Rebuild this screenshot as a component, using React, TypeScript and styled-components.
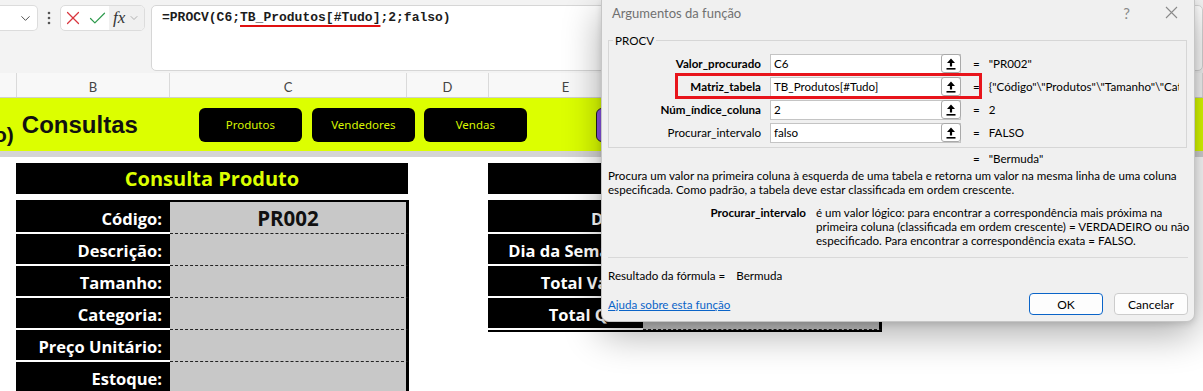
import styled, { createGlobalStyle } from "styled-components";
import { X, Check, ChevronDown } from "lucide-react";

const GlobalStyle = createGlobalStyle`
  html, body { margin: 0; padding: 0; background: #ffffff; }
  body { font-family: "Lato", "Liberation Sans", sans-serif; }
`;

// sheet column widths: A (cut off), B, C, D, E, F, rest
const COLUMNS = "17px 153px 237px 82px 154px 237px 1fr";

const Screen = styled.div`
  position: relative;
  width: 1203px;
  height: 391px;
  overflow: hidden;
  background: #fff;
`;

/* ---------- formula bar ---------- */
const FormulaBar = styled.div`
  display: flex;
  align-items: flex-start;
  height: 73px;
  box-sizing: border-box;
  padding-top: 5px;
  background: #f3f3f3;
`;

const NameBox = styled.div`
  width: 38px;
  height: 26px;
  box-sizing: border-box;
  display: flex;
  align-items: center;
  justify-content: flex-end;
  padding-right: 4px;
  background: #fff;
  border: 1px solid #dcdcdc;
  border-left: none;
  border-radius: 0 5px 5px 0;
  color: #444;
`;

const Grip = styled.div`
  width: 22px;
  height: 26px;
  display: flex;
  align-items: center;
  justify-content: center;
`;

const ActionBox = styled.div`
  width: 85px;
  height: 26px;
  box-sizing: border-box;
  display: flex;
  align-items: stretch;
  background: #fff;
  border: 1px solid #dcdcdc;
  border-radius: 5px;
  overflow: hidden;
`;

const ActionIcon = styled.span<{ $color: string }>`
  width: 24px;
  display: flex;
  align-items: center;
  justify-content: center;
  color: ${(p) => p.$color};
`;

const FxButton = styled.span`
  flex: 1;
  display: flex;
  align-items: center;
  gap: 3px;
  padding-left: 4px;
  background: #f0f0f0;
  color: #999;
`;

const FxText = styled.span`
  font: italic 17px "Liberation Serif", serif;
  color: #333;
`;

const FormulaInput = styled.div`
  flex: 1;
  height: 66px;
  box-sizing: border-box;
  margin-left: 6px;
  padding: 3px 10px;
  background: #fff;
  border: 1px solid #d6d6d6;
  border-radius: 5px;
  font: 700 13px/18px "Liberation Mono", monospace;
  color: #1c1c1c;
  white-space: nowrap;
`;

const RefMark = styled.span`
  text-decoration: underline;
  text-decoration-color: #e01010;
  text-decoration-thickness: 2px;
  text-underline-offset: 4px;
`;

/* ---------- column headers ---------- */
const ColumnHeaders = styled.div`
  display: grid;
  grid-template-columns: ${COLUMNS};
  height: 25px;
  box-sizing: border-box;
  background: #f8f8f8;
  border-bottom: 1px solid #cfcfcf;
`;

const ColumnHeader = styled.div`
  display: flex;
  align-items: center;
  justify-content: center;
  padding-top: 4px;
  border-right: 1px solid #dadada;
  font: 13px "Lato", sans-serif;
  color: #444;
`;

/* ---------- yellow banner ---------- */
const Banner = styled.div`
  display: flex;
  align-items: center;
  height: 53px;
  background: #dcff00;
`;

const CutLabel = styled.span`
  align-self: flex-end;
  margin: 0 0 4px -6px;
  font: 700 21px/24px "Liberation Sans", Arial, sans-serif;
  color: #111;
`;

const BannerTitle = styled.h1`
  margin: 0 0 0 8px;
  font: 700 24px "Liberation Sans", Arial, sans-serif;
  color: #111;
`;

const NavButton = styled.div<{ $offset: number; $purple?: boolean }>`
  width: 103px;
  height: 34px;
  box-sizing: border-box;
  margin-left: ${(p) => p.$offset}px;
  display: flex;
  align-items: center;
  justify-content: center;
  border-radius: 6px;
  background: ${(p) => (p.$purple ? "#8b55e8" : "#000")};
  border: ${(p) => (p.$purple ? "1.5px solid #222" : "none")};
  color: #d9f500;
  font: 11.5px "Noto Sans", sans-serif;
`;

const BannerEdge = styled.div`
  height: 6px;
  background: #d4d4d4;
`;

/* ---------- query panels ---------- */
const Sheet = styled.div`
  display: grid;
  grid-template-columns: ${COLUMNS};
  padding-top: 6px;
`;

const Panel = styled.section<{ $cols: string }>`
  grid-column: ${(p) => p.$cols};
  margin: 0 -2px 0 -1px;
`;

const PanelHeader = styled.div`
  height: 31px;
  margin: 0 1px 6px 0;
  display: flex;
  align-items: center;
  justify-content: center;
  background: #000;
  color: #dcff00;
  font: 700 20px "Open Sans", sans-serif;
`;

const PanelBody = styled.div`
  border-top: 2px solid #000;
  border-bottom: 2px solid #000;
`;

const Field = styled.div<{ $labelWidth: number }>`
  display: grid;
  grid-template-columns: ${(p) => p.$labelWidth}px 1fr;
  height: 32px;
`;

const FieldLabel = styled.div`
  box-sizing: border-box;
  display: flex;
  align-items: center;
  justify-content: flex-end;
  padding: 2px 8px 0 0;
  background: #000;
  border-bottom: 2px solid #fff;
  color: #fff;
  font: 700 16.5px "Open Sans", sans-serif;
  white-space: nowrap;
  overflow: hidden;
`;

const FieldValue = styled.div`
  box-sizing: border-box;
  display: flex;
  align-items: center;
  justify-content: center;
  background: #c8c8c8;
  border-bottom: 1px dashed #222;
  border-right: 3px solid #000;
  color: #111;
  font: 700 20.5px "Open Sans", sans-serif;
`;

/* ---------- function arguments dialog ---------- */
const Dialog = styled.div`
  position: absolute;
  left: 601px;
  top: 0;
  width: 594px;
  height: 322px;
  box-sizing: border-box;
  display: flex;
  flex-direction: column;
  padding: 0 6px;
  overflow: hidden;
  background: #f0f0f0;
  border: 1px solid #c6c6c6;
  border-top: none;
  border-radius: 0 0 8px 8px;
  box-shadow: 0 12px 38px rgba(0, 0, 0, 0.33), 0 2px 6px rgba(0, 0, 0, 0.12);
  font: 11.6px "Lato", sans-serif;
  color: #000;
`;

const TitleBar = styled.div`
  display: flex;
  align-items: center;
  height: 25px;
  margin: 0 -6px;
  padding-left: 10px;
  color: #707070;
  font-size: 13px;
`;

const TitleText = styled.span`
  flex: 1;
`;

const TitleButton = styled.span`
  width: 45px;
  height: 25px;
  display: flex;
  align-items: center;
  justify-content: center;
  color: #8a8a8a;
  font-size: 15px;
`;

const ArgGroup = styled.fieldset`
  margin: 8px 1px 0 0;
  padding: 4px 0 3px 0;
  min-width: 0;
  border: 1px solid #d6d6d6;
`;

const GroupLegend = styled.legend`
  margin-left: 4px;
  padding: 0 2px;
  line-height: 15px;
`;

const ArgRow = styled.div`
  position: relative;
  display: grid;
  grid-template-columns: 152px 191px minmax(0, 1fr);
  column-gap: 9px;
  align-items: center;
  height: 23px;
`;

const ArgLabel = styled.span<{ $bold?: boolean }>`
  text-align: right;
  font-weight: ${(p) => (p.$bold ? 700 : 400)};
  white-space: nowrap;
`;

const ArgInput = styled.div`
  display: flex;
  align-items: center;
  height: 20px;
  box-sizing: border-box;
  padding-left: 3px;
  background: #fff;
  border: 1px solid #c4c4c4;
`;

const ArgText = styled.span`
  flex: 1;
  white-space: nowrap;
`;

const CollapseButton = styled.span`
  width: 20px;
  height: 19px;
  box-sizing: border-box;
  margin-right: -1px;
  display: flex;
  align-items: center;
  justify-content: center;
  background: #fff;
  border: 1px solid #a9a9a9;
  border-radius: 3px;
`;

const ArgValue = styled.div`
  display: flex;
  gap: 9px;
  padding-left: 3px;
  margin-right: 7px;
  overflow: hidden;
  white-space: nowrap;
`;

const Highlight = styled.div`
  position: absolute;
  grid-column: 1 / -1;
  grid-row: 1;
  left: 66px;
  top: -2px;
  width: 307px;
  height: 26px;
  box-sizing: border-box;
  border: 3px solid #e8141b;
  pointer-events: none;
`;

const FormulaResult = styled.div`
  display: flex;
  gap: 9px;
  height: 14px;
  margin-top: 4px;
  padding-left: 365px;
  line-height: 14px;
`;

const Description = styled.p`
  margin: 3px 0 0;
  line-height: 14px;
  white-space: nowrap;
`;

const ArgHelp = styled.div`
  display: grid;
  grid-template-columns: 198px 1fr;
  column-gap: 10px;
  margin-top: 9px;
  line-height: 14px;
  white-space: nowrap;
`;

const ArgHelpName = styled.span`
  text-align: right;
  font-weight: 700;
`;

const Divider = styled.hr`
  margin: 9px 0 0;
  border: none;
  border-top: 1px solid #d9d9d9;
`;

const ResultLine = styled.div`
  margin-top: 11px;
  line-height: 14px;
`;

const ResultValue = styled.span`
  margin-left: 11px;
`;

const Footer = styled.div`
  display: flex;
  align-items: center;
  gap: 11px;
  margin-top: 10px;
`;

const HelpLink = styled.a`
  flex: 1;
  color: #0a64c8;
  text-decoration: underline;
`;

const DialogButton = styled.button<{ $primary?: boolean }>`
  width: 74px;
  height: 22px;
  box-sizing: border-box;
  padding: 0;
  background: #fdfdfd;
  border: ${(p) => (p.$primary ? "1.5px solid #0a64c8" : "1px solid #cccccc")};
  border-radius: 4px;
  font: 12px "Lato", sans-serif;
  color: #000;
`;

function CollapseIcon() {
  return (
    <svg width="10" height="12" viewBox="0 0 10 12">
      <path d="M5 0.5 L1 5 H3.9 V8.5 H6.1 V5 H9 Z" fill="#000" />
      <rect x="0.5" y="10" width="9" height="1.6" fill="#000" />
    </svg>
  );
}

function GripIcon() {
  return (
    <svg width="4" height="14" viewBox="0 0 4 14">
      <circle cx="2" cy="2" r="1.3" fill="#555" />
      <circle cx="2" cy="7" r="1.3" fill="#555" />
      <circle cx="2" cy="12" r="1.3" fill="#555" />
    </svg>
  );
}

function CloseIcon() {
  return (
    <svg width="13" height="13" viewBox="0 0 13 13">
      <path d="M1 1 L12 12 M12 1 L1 12" stroke="#8a8a8a" strokeWidth="1.1" />
    </svg>
  );
}

const productFields = ["Código:", "Descrição:", "Tamanho:", "Categoria:", "Preço Unitário:", "Estoque:"];
const salesFields = ["Data:", "Dia da Semana:", "Total Valor:", "Total Qtd.:"];

const args = [
  { name: "Valor_procurado", input: "C6", value: "\"PR002\"", bold: true },
  { name: "Matriz_tabela", input: "TB_Produtos[#Tudo]", value: "{\"Código\"\\\"Produtos\"\\\"Tamanho\"\\\"Categoria\"\\\"Preço Unitário\"", bold: true, marked: true },
  { name: "Núm_índice_coluna", input: "2", value: "2", bold: true },
  { name: "Procurar_intervalo", input: "falso", value: "FALSO", bold: false },
];

export default function App() {
  return (
    <Screen>
      <GlobalStyle />
      <FormulaBar>
        <NameBox>
          <ChevronDown size={15} strokeWidth={1.5} />
        </NameBox>
        <Grip>
          <GripIcon />
        </Grip>
        <ActionBox>
          <ActionIcon $color="#d9363e">
            <X size={22} strokeWidth={1.3} />
          </ActionIcon>
          <ActionIcon $color="#2e9a4d">
            <Check size={21} strokeWidth={1.4} />
          </ActionIcon>
          <FxButton>
            <FxText>fx</FxText>
            <ChevronDown size={12} strokeWidth={1.5} />
          </FxButton>
        </ActionBox>
        <FormulaInput>
          =PROCV(C6;<RefMark>TB_Produtos[#Tudo]</RefMark>;2;falso)
        </FormulaInput>
      </FormulaBar>

      <ColumnHeaders>
        {["", "B", "C", "D", "E", "F", "G"].map((c, i) => (
          <ColumnHeader key={i}>{c}</ColumnHeader>
        ))}
      </ColumnHeaders>

      <Banner>
        <CutLabel>o)</CutLabel>
        <BannerTitle>Consultas</BannerTitle>
        <NavButton $offset={61}>Produtos</NavButton>
        <NavButton $offset={10}>Vendedores</NavButton>
        <NavButton $offset={9}>Vendas</NavButton>
        <NavButton $offset={69} $purple>
          Vendedor
        </NavButton>
      </Banner>
      <BannerEdge />

      <Sheet>
        <Panel $cols="2 / 4">
          <PanelHeader>Consulta Produto</PanelHeader>
          <PanelBody>
            {productFields.map((f, i) => (
              <Field key={f} $labelWidth={154}>
                <FieldLabel>{f}</FieldLabel>
                <FieldValue>{i === 0 ? "PR002" : ""}</FieldValue>
              </Field>
            ))}
          </PanelBody>
        </Panel>
        <Panel $cols="5 / 7">
          <PanelHeader>Consulta Vendas</PanelHeader>
          <PanelBody>
            {salesFields.map((f) => (
              <Field key={f} $labelWidth={155}>
                <FieldLabel>{f}</FieldLabel>
                <FieldValue />
              </Field>
            ))}
          </PanelBody>
        </Panel>
      </Sheet>

      <Dialog>
        <TitleBar>
          <TitleText>Argumentos da função</TitleText>
          <TitleButton>?</TitleButton>
          <TitleButton>
            <CloseIcon />
          </TitleButton>
        </TitleBar>

        <ArgGroup>
          <GroupLegend>PROCV</GroupLegend>
          {args.map((a) => (
            <ArgRow key={a.name}>
              <ArgLabel $bold={a.bold}>{a.name}</ArgLabel>
              <ArgInput>
                <ArgText>{a.input}</ArgText>
                <CollapseButton>
                  <CollapseIcon />
                </CollapseButton>
              </ArgInput>
              <ArgValue>
                <span>=</span>
                <span>{a.value}</span>
              </ArgValue>
              {a.marked && <Highlight />}
            </ArgRow>
          ))}
        </ArgGroup>

        <FormulaResult>
          <span>=</span>
          <span>"Bermuda"</span>
        </FormulaResult>

        <Description>
          Procura um valor na primeira coluna à esquerda de uma tabela e retorna um valor na mesma linha de uma coluna
          <br />
          especificada. Como padrão, a tabela deve estar classificada em ordem crescente.
        </Description>

        <ArgHelp>
          <ArgHelpName>Procurar_intervalo</ArgHelpName>
          <span>
            é um valor lógico: para encontrar a correspondência mais próxima na
            <br />
            primeira coluna (classificada em ordem crescente) = VERDADEIRO ou não
            <br />
            especificado. Para encontrar a correspondência exata = FALSO.
          </span>
        </ArgHelp>

        <Divider />

        <ResultLine>
          Resultado da fórmula =<ResultValue>Bermuda</ResultValue>
        </ResultLine>

        <Footer>
          <HelpLink>Ajuda sobre esta função</HelpLink>
          <DialogButton $primary>OK</DialogButton>
          <DialogButton>Cancelar</DialogButton>
        </Footer>
      </Dialog>
    </Screen>
  );
}
